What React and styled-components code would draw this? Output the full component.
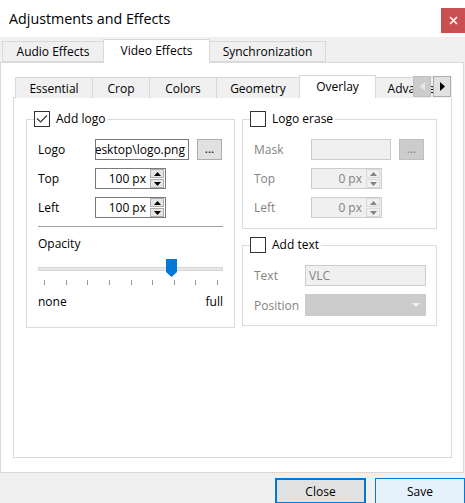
import React from 'react';
import styled, { createGlobalStyle } from 'styled-components';

const Global = createGlobalStyle`
  html, body { margin: 0; padding: 0; background: #f0f0f0; }
  body { font-family: "Open Sans", "Noto Sans", sans-serif; font-size: 12px; color: #000; }
  * { box-sizing: border-box; }
`;

const Window = styled.div`
  width: 465px;
  height: 503px;
  overflow: hidden;
  display: flex;
  flex-direction: column;
  background: #f0f0f0;
`;

const TitleBar = styled.div`
  height: 37px;
  flex: none;
  background: #fff;
  display: flex;
  align-items: flex-start;
  padding-left: 9px;
`;

const Title = styled.div`
  font-size: 14.3px;
  line-height: 37px;
`;

const CloseX = styled.div`
  margin-left: auto;
  margin-top: 8px;
  width: 24px;
  height: 25px;
  background: #c75050;
  display: flex;
  align-items: center;
  justify-content: center;
`;

const OuterTabBar = styled.div`
  height: 25px;
  flex: none;
  display: flex;
  align-items: flex-end;
  padding-left: 2px;
`;

const OuterTab = styled.div`
  width: ${p => p.$w}px;
  height: ${p => (p.$active ? 24 : 21)}px;
  margin-left: ${p => (p.$first ? 0 : -1)}px;
  margin-bottom: ${p => (p.$active ? -1 : 0)}px;
  border: 1px solid #d9d9d9;
  border-bottom: ${p => (p.$active ? 'none' : '1px solid #d9d9d9')};
  background: ${p => (p.$active ? '#fff' : '#f0f0f0')};
  position: relative;
  z-index: ${p => (p.$active ? 2 : 1)};
  display: flex;
  align-items: center;
  justify-content: center;
  padding-bottom: ${p => (p.$active ? 2 : 0)}px;
  white-space: nowrap;
`;

const Pane = styled.div`
  width: 464px;
  height: 411px;
  flex: none;
  background: #fff;
  border: 1px solid #d9d9d9;
  padding: 12px 11px 14px 12px;
  display: flex;
  flex-direction: column;
`;

const InnerTabBar = styled.div`
  height: 23px;
  flex: none;
  display: flex;
  align-items: flex-start;
  padding-left: 2px;
  overflow: hidden;
  position: relative;
  background: linear-gradient(#d9d9d9, #d9d9d9) left bottom / 100% 1px no-repeat;
`;

const InnerTab = styled.div`
  flex: none;
  width: ${p => p.$w}px;
  height: ${p => (p.$active ? 23 : 21)}px;
  margin-top: ${p => (p.$active ? 0 : 2)}px;
  margin-left: ${p => (p.$first ? 0 : -1)}px;
  border: 1px solid #d9d9d9;
  border-bottom: none;
  background: ${p => (p.$active ? '#fff' : '#f0f0f0')};
  position: relative;
  z-index: ${p => (p.$active ? 2 : 1)};
  display: flex;
  align-items: center;
  justify-content: center;
  padding-bottom: ${p => (p.$active ? 2 : 0)}px;
  white-space: nowrap;
`;

const Scroller = styled.div`
  position: absolute;
  right: 1px;
  top: 1px;
  z-index: 3;
  display: flex;
  gap: 2px;
`;

const ScrollBtn = styled.div`
  width: 18px;
  height: 21px;
  border: 1px solid ${p => (p.$disabled ? '#bfbfbf' : '#adadad')};
  background: ${p => (p.$disabled ? '#cccccc' : '#e1e1e1')};
  display: flex;
  align-items: center;
  justify-content: center;
`;

const InnerPane = styled.div`
  flex: 1;
  border: 1px solid #d9d9d9;
  border-top: none;
  padding: 13px 12px 0 12px;
  display: grid;
  grid-template-columns: 209px 195px;
  column-gap: 7px;
  align-items: start;
`;

const Column = styled.div`
  display: flex;
  flex-direction: column;
  gap: 8px;
`;

const Group = styled.fieldset`
  margin: 0;
  padding: 0;
  min-width: 0;
  border: 1px solid #dcdcdc;
`;

const Legend = styled.legend`
  margin-left: 7px;
  padding: 0 2px 0 0;
  height: 16px;
  display: flex;
  align-items: center;
  gap: 6px;
  line-height: 16px;
`;

const Check = styled.span`
  width: 16px;
  height: 16px;
  border: 1px solid #333;
  background: #fff;
  display: flex;
  align-items: center;
  justify-content: center;
`;

const GroupBody = styled.div`
  padding: 12px 11px ${p => p.$pb}px 11px;
  display: flex;
  flex-direction: column;
`;

const Rows = styled.div`
  display: flex;
  flex-direction: column;
  gap: 8px;
`;

const Row = styled.div`
  display: grid;
  grid-template-columns: ${p => p.$label}px auto auto;
  column-gap: 8px;
  align-items: center;
  justify-content: start;
  height: 21px;
`;

const Label = styled.span`
  color: ${p => (p.$disabled ? '#838383' : '#000')};
  white-space: nowrap;
`;

const TextField = styled.div`
  width: ${p => p.$w}px;
  height: 21px;
  border: 1px solid ${p => (p.$disabled ? '#cccccc' : '#7a7a7a')};
  background: ${p => (p.$disabled ? '#f0f0f0' : '#fff')};
  color: ${p => (p.$disabled ? '#838383' : '#000')};
  display: flex;
  align-items: center;
  justify-content: ${p => (p.$end ? 'flex-end' : 'flex-start')};
  padding: 0 3px;
  overflow: hidden;
  white-space: nowrap;
`;

const DotsButton = styled.div`
  width: 25px;
  height: 21px;
  border: 1px solid ${p => (p.$disabled ? '#bfbfbf' : '#adadad')};
  background: ${p => (p.$disabled ? '#cccccc' : '#e1e1e1')};
  color: ${p => (p.$disabled ? '#838383' : '#000')};
  display: flex;
  align-items: center;
  justify-content: center;
  padding-bottom: 2px;
`;

const SpinWrap = styled.div`
  width: 71px;
  height: 21px;
  display: flex;
  border: 1px solid ${p => (p.$disabled ? '#cccccc' : '#7a7a7a')};
  background: ${p => (p.$disabled ? '#f0f0f0' : '#fff')};
  color: ${p => (p.$disabled ? '#838383' : '#000')};
`;

const SpinValue = styled.div`
  flex: 1;
  display: flex;
  align-items: center;
  justify-content: flex-end;
  padding-right: 4px;
  white-space: nowrap;
`;

const SpinButtons = styled.div`
  width: 14px;
  display: flex;
  flex-direction: column;
  gap: 1px;
  margin-right: 1px;
`;

const SpinBtn = styled.div`
  flex: 1;
  border: 1px solid ${p => (p.$disabled ? '#d9d9d9' : '#adadad')};
  background: ${p => (p.$disabled ? '#f0f0f0' : '#e5e5e5')};
  display: flex;
  align-items: center;
  justify-content: center;
`;

const Separator = styled.div`
  height: 1px;
  background: #a0a0a0;
  margin-top: 8px;
`;

const SubLabel = styled.div`
  line-height: 16px;
  margin-top: 9px;
`;

const Slider = styled.div`
  position: relative;
  height: 30px;
  margin-top: 4px;
`;

const Groove = styled.div`
  margin-top: 11px;
  height: 4px;
  background: #e7e7e7;
  border: 1px solid #d6d6d6;
`;

const Ticks = styled.div`
  margin-top: 9px;
  height: 5px;
  display: flex;
  justify-content: space-between;
  padding: 0 5px 0 6px;
`;

const Tick = styled.span`
  width: 1px;
  height: 5px;
  background: #9a9a9a;
`;

const Thumb = styled.svg`
  position: absolute;
  top: 3px;
`;

const Scale = styled.div`
  margin-top: 8px;
  line-height: 16px;
  display: flex;
  justify-content: space-between;
`;

const Combo = styled.div`
  width: 121px;
  height: 22px;
  background: #cccccc;
  border: 1px solid #cccccc;
  display: flex;
  align-items: center;
  justify-content: flex-end;
  padding-right: 5px;
`;

const Footer = styled.div`
  height: 30px;
  flex: none;
  display: flex;
  justify-content: flex-end;
  align-items: flex-start;
  gap: 9px;
  padding-top: 5px;
`;

const DialogButton = styled.div`
  width: ${p => p.$w}px;
  height: 26px;
  flex: none;
  border: ${p => (p.$default ? '2px solid #0078d7' : '1px solid #0078d7')};
  background: ${p => (p.$default ? '#e1e1e1' : '#e5f1fb')};
  display: flex;
  align-items: center;
  justify-content: center;
`;

const UpArrow = ({ color = '#000' }) => (
  <svg width="7" height="4" viewBox="0 0 7 4"><polygon points="0,4 7,4 3.5,0" fill={color} /></svg>
);
const DownArrow = ({ color = '#000' }) => (
  <svg width="7" height="4" viewBox="0 0 7 4"><polygon points="0,0 7,0 3.5,4" fill={color} /></svg>
);

const CheckBox = ({ checked }) => (
  <Check>
    {checked && (
      <svg width="12" height="10" viewBox="0 0 12 10">
        <polyline points="1,4.5 4.5,8 11,1.5" fill="none" stroke="#333" strokeWidth="1.2" />
      </svg>
    )}
  </Check>
);

const Spin = ({ value, disabled }) => {
  const c = disabled ? '#838383' : '#000';
  return (
    <SpinWrap $disabled={disabled}>
      <SpinValue>{value}</SpinValue>
      <SpinButtons>
        <SpinBtn $disabled={disabled}><UpArrow color={c} /></SpinBtn>
        <SpinBtn $disabled={disabled}><DownArrow color={c} /></SpinBtn>
      </SpinButtons>
    </SpinWrap>
  );
};

const outerTabs = [
  { label: 'Audio Effects', w: 102 },
  { label: 'Video Effects', w: 107, active: true },
  { label: 'Synchronization', w: 117 },
];

const innerTabs = [
  { label: 'Essential', w: 78 },
  { label: 'Crop', w: 58 },
  { label: 'Colors', w: 68 },
  { label: 'Geometry', w: 84 },
  { label: 'Overlay', w: 77, active: true },
  { label: 'Advanced', w: 80 },
];

const opacity = 0.737;
const trackWidth = 185;

export default function App() {
  const thumbLeft = Math.round(6 + opacity * (trackWidth - 12) - 5.5);
  return (
    <Window>
      <Global />
      <TitleBar>
        <Title>Adjustments and Effects</Title>
        <CloseX>
          <svg width="9" height="9" viewBox="0 0 9 9">
            <path d="M1 1L8 8M8 1L1 8" stroke="#fff" strokeWidth="1.6" />
          </svg>
        </CloseX>
      </TitleBar>

      <OuterTabBar>
        {outerTabs.map((t, i) => (
          <OuterTab key={t.label} $w={t.w} $active={t.active} $first={i === 0}>{t.label}</OuterTab>
        ))}
      </OuterTabBar>

      <Pane>
        <InnerTabBar>
          {innerTabs.map((t, i) => (
            <InnerTab key={t.label} $w={t.w} $active={t.active} $first={i === 0}>{t.label}</InnerTab>
          ))}
          <Scroller>
            <ScrollBtn $disabled>
              <svg width="5" height="9" viewBox="0 0 5 9"><polygon points="5,0 5,9 0,4.5" fill="#e6e6e6" /></svg>
            </ScrollBtn>
            <ScrollBtn>
              <svg width="5" height="9" viewBox="0 0 5 9"><polygon points="0,0 0,9 5,4.5" fill="#000" /></svg>
            </ScrollBtn>
          </Scroller>
        </InnerTabBar>

        <InnerPane>
          <Group>
            <Legend><CheckBox checked /><span>Add logo</span></Legend>
            <GroupBody $pb={17}>
              <Rows>
                <Row $label={49}>
                  <Label>Logo</Label>
                  <TextField $w={94} $end>esktop\logo.png</TextField>
                  <DotsButton>...</DotsButton>
                </Row>
                <Row $label={49}>
                  <Label>Top</Label>
                  <Spin value="100 px" />
                </Row>
                <Row $label={49}>
                  <Label>Left</Label>
                  <Spin value="100 px" />
                </Row>
              </Rows>
              <Separator />
              <SubLabel>Opacity</SubLabel>
              <Slider>
                <Groove />
                <Ticks>
                  {Array.from({ length: 9 }, (_, i) => <Tick key={i} />)}
                </Ticks>
                <Thumb width="11" height="18" viewBox="0 0 11 18" style={{ left: thumbLeft }}>
                  <path d="M0 0H11V13L5.5 18L0 13Z" fill="#0078d7" />
                </Thumb>
              </Slider>
              <Scale><span>none</span><span>full</span></Scale>
            </GroupBody>
          </Group>

          <Column>
            <Group>
              <Legend><CheckBox /><span>Logo erase</span></Legend>
              <GroupBody $pb={10}>
                <Rows>
                  <Row $label={49}>
                    <Label $disabled>Mask</Label>
                    <TextField $w={80} $disabled />
                    <DotsButton $disabled>...</DotsButton>
                  </Row>
                  <Row $label={49}>
                    <Label $disabled>Top</Label>
                    <Spin value="0 px" disabled />
                  </Row>
                  <Row $label={49}>
                    <Label $disabled>Left</Label>
                    <Spin value="0 px" disabled />
                  </Row>
                </Rows>
              </GroupBody>
            </Group>
            <Group>
              <Legend><CheckBox /><span>Add text</span></Legend>
              <GroupBody $pb={10}>
                <Rows>
                  <Row $label={43}>
                    <Label $disabled>Text</Label>
                    <TextField $w={121} $disabled>VLC</TextField>
                  </Row>
                  <Row $label={43}>
                    <Label $disabled>Position</Label>
                    <Combo>
                      <svg width="8" height="4" viewBox="0 0 8 4"><polygon points="0,0 8,0 4,4" fill="#f2f2f2" /></svg>
                    </Combo>
                  </Row>
                </Rows>
              </GroupBody>
            </Group>
          </Column>
        </InnerPane>
      </Pane>

      <Footer>
        <DialogButton $w={91} $default>Close</DialogButton>
        <DialogButton $w={90}>Save</DialogButton>
      </Footer>
    </Window>
  );
}
